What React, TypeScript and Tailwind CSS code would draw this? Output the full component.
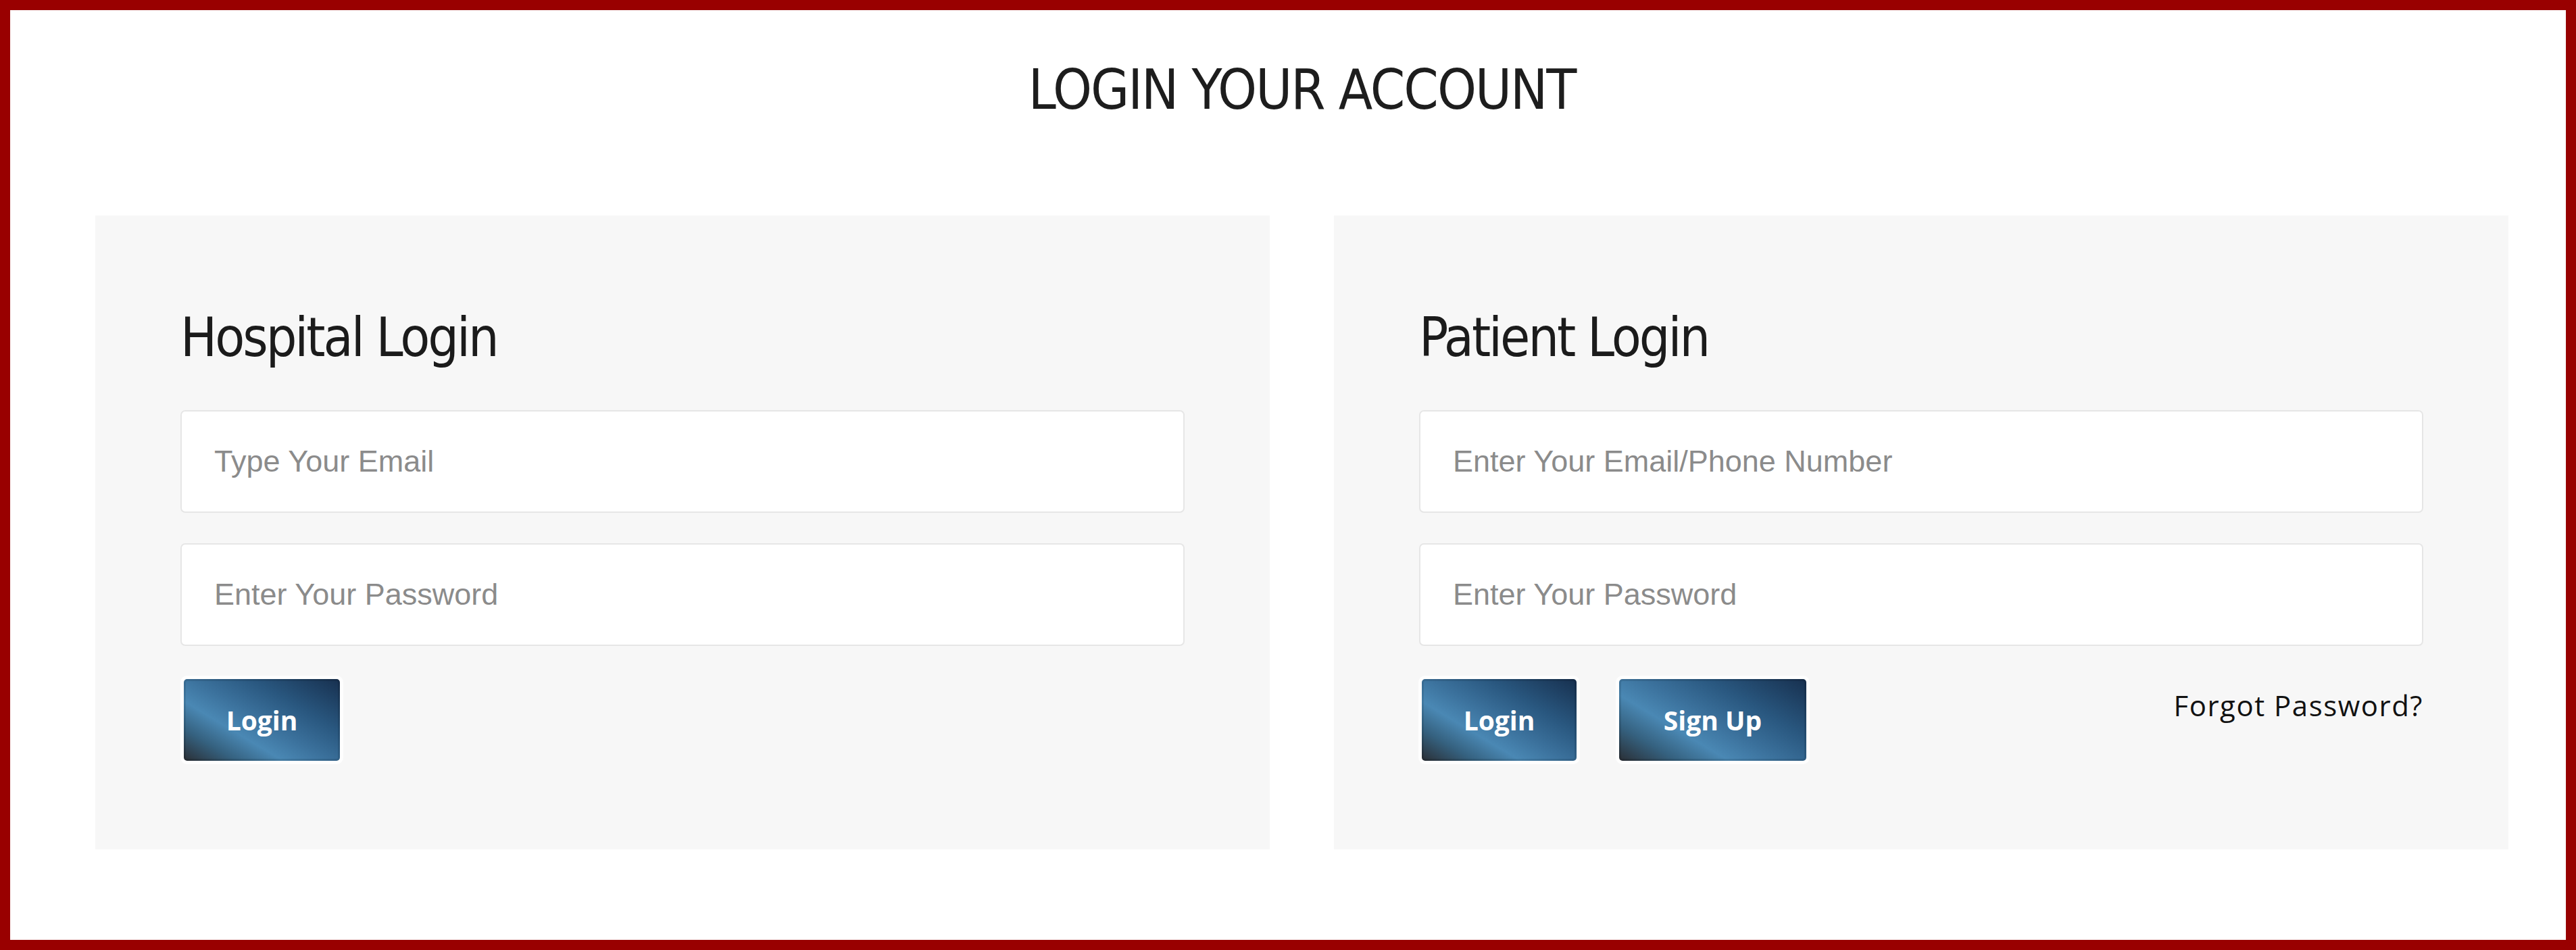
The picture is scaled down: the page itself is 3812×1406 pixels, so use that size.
import React from 'react';

const headingFont = "font-['Liberation_Sans_Narrow','DejaVu_Sans_Condensed','Liberation_Sans',sans-serif]";

const buttonClass =
  "flex items-center justify-center h-[121px] rounded-[5px] text-white font-['Open_Sans',sans-serif] font-bold text-[39px] leading-none " +
  "bg-[linear-gradient(211deg,#17304f_0%,#29577f_30%,#3b719c_50%,#4a88b4_66%,#35617f_82%,#2a2e34_100%)] " +
  "ring-[5px] ring-white/90 inset-ring-[3px] inset-ring-black/10";

function Field({ placeholder, type = 'text' }: { placeholder: string; type?: string }) {
  return (
    <input
      type={type}
      placeholder={placeholder}
      className="block w-full h-[152px] bg-white border-2 border-[#e6e6e6] rounded-[7px] pl-[48px] pr-6 font-['Liberation_Sans',Arial,sans-serif] text-[45px] text-[#333] placeholder:text-[#8b8b8b] outline-none"
    />
  );
}

function Panel({ title, children }: { title: string; children: React.ReactNode }) {
  return (
    <div className="bg-[#f7f7f7] px-[126px] pt-[141px] pb-[131px]">
      <h2 className={`${headingFont} text-[80px] leading-none tracking-[-3px] text-[#1b1b1b] font-normal`}>{title}</h2>
      {children}
    </div>
  );
}

export default function App() {
  return (
    <div className="h-screen w-full bg-white border-[15px] border-[#990000] overflow-hidden">
      <div className="pl-[126px] pr-[85px] pt-[77px]">
        <h1 className={`${headingFont} text-center text-[82px] leading-none tracking-[-2px] text-[#1d1d1d] font-normal`}>
          LOGIN YOUR ACCOUNT
        </h1>

        <div className="grid grid-cols-2 gap-[95px] mt-[145px]">
          {/* Hospital */}
          <Panel title="Hospital Login">
            <div className="mt-[67px] flex flex-col gap-[45px]">
              <Field placeholder="Type Your Email" type="email" />
              <Field placeholder="Enter Your Password" type="password" />
            </div>
            <div className="mt-[49px] pl-[5px] flex">
              <button className={`${buttonClass} w-[231px]`}>Login</button>
            </div>
          </Panel>

          {/* Patient */}
          <Panel title="Patient Login">
            <div className="mt-[67px] flex flex-col gap-[45px]">
              <Field placeholder="Enter Your Email/Phone Number" />
              <Field placeholder="Enter Your Password" type="password" />
            </div>
            <div className="mt-[49px] pl-[4px] flex items-start">
              <button className={`${buttonClass} w-[229px]`}>Login</button>
              <button className={`${buttonClass} w-[277px] ml-[63px]`}>Sign Up</button>
              <a
                href="#"
                className="ml-auto mt-[18px] font-['Open_Sans',sans-serif] text-[42px] leading-none tracking-[1.5px] text-[#111]"
              >
                Forgot Password?
              </a>
            </div>
          </Panel>
        </div>
      </div>
    </div>
  );
}
